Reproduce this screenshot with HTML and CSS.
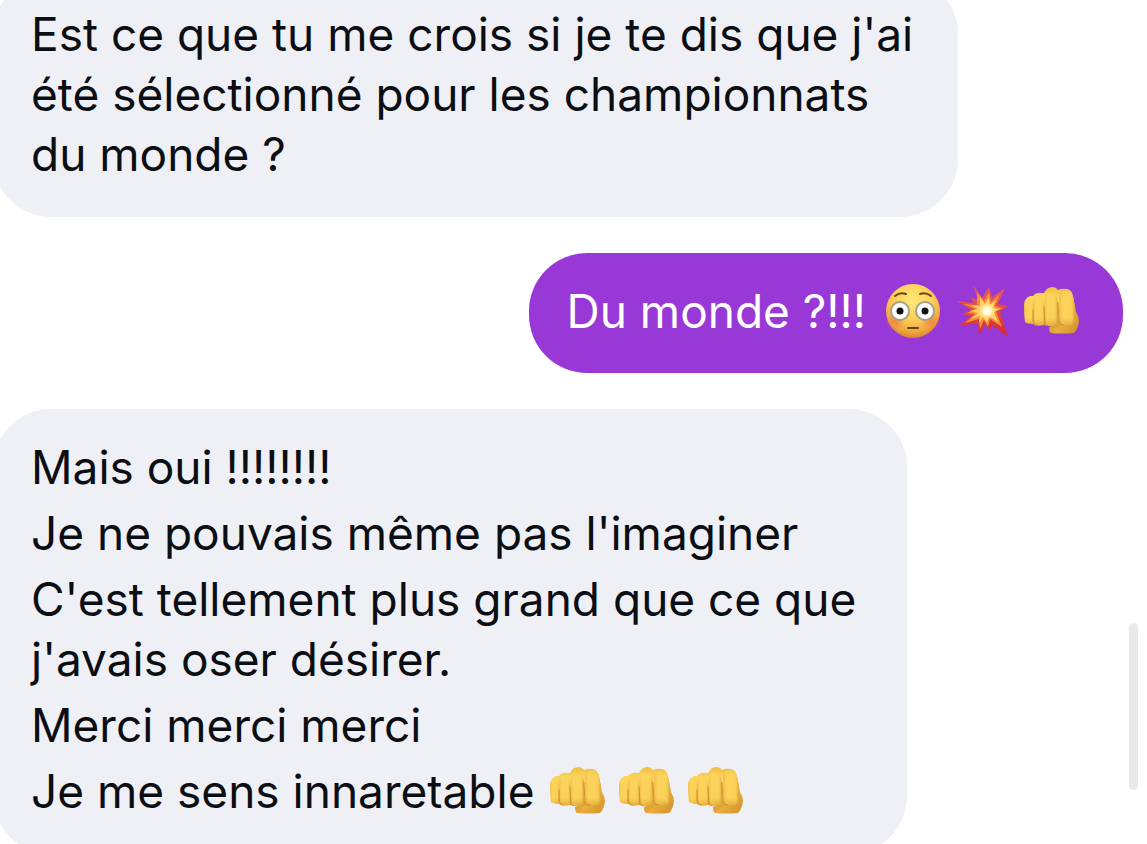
FILE: index.html
```html
<!DOCTYPE html>
<html lang="fr">

<head>
    <meta charset="UTF-8">
    <meta name="viewport" content="width=device-width, initial-scale=1">
    <title>Messages</title>
    <link rel="stylesheet" href="styles.css">
</head>

<body>
    <svg class="sprites" width="0" height="0" aria-hidden="true">
        <defs>
            <linearGradient id="skin" x1="0" y1="0" x2="0" y2="1">
                <stop offset="0" stop-color="#efbd42"/>
                <stop offset="0.25" stop-color="#fbd25a"/>
                <stop offset="0.8" stop-color="#f8cd56"/>
                <stop offset="1" stop-color="#d99a2c"/>
            </linearGradient>
            <linearGradient id="finger" x1="0" y1="0" x2="1" y2="0">
                <stop offset="0" stop-color="#e5ac3a" stop-opacity="0.6"/>
                <stop offset="0.25" stop-color="#ffd760" stop-opacity="0.4"/>
                <stop offset="0.75" stop-color="#ffd760" stop-opacity="0.2"/>
                <stop offset="1" stop-color="#cd8a25" stop-opacity="0.7"/>
            </linearGradient>
            <linearGradient id="thumb" x1="0" y1="0" x2="1" y2="1">
                <stop offset="0" stop-color="#b97820"/>
                <stop offset="0.6" stop-color="#e8ad3b"/>
                <stop offset="1" stop-color="#cf8f2a"/>
            </linearGradient>
            <radialGradient id="face" cx="0.5" cy="0.3" r="0.7">
                <stop offset="0" stop-color="#ffe976"/>
                <stop offset="0.5" stop-color="#fbcf58"/>
                <stop offset="0.85" stop-color="#f0a540"/>
                <stop offset="1" stop-color="#d9822e"/>
            </radialGradient>
            <radialGradient id="cheek">
                <stop offset="0" stop-color="#ee6f3c" stop-opacity="0.6"/>
                <stop offset="1" stop-color="#ee6f3c" stop-opacity="0"/>
            </radialGradient>
            <linearGradient id="flame" x1="0" y1="0" x2="0" y2="1">
                <stop offset="0" stop-color="#d95b70"/>
                <stop offset="0.5" stop-color="#e34a3c"/>
                <stop offset="1" stop-color="#cf2638"/>
            </linearGradient>
            <radialGradient id="glow">
                <stop offset="0" stop-color="#ffffff"/>
                <stop offset="0.4" stop-color="#fffbd0"/>
                <stop offset="1" stop-color="#ffe070" stop-opacity="0"/>
            </radialGradient>
        </defs>
        <symbol id="fist" viewBox="0 0 56 56">
            <path fill="url(#thumb)" d="M49 12Q52 20 53 29Q56 34 56 38Q55 46 51 50Q40 51 28 50Q26 49 26 44L34 41L48 40Z"/>
            <path fill="url(#skin)" d="M1 21Q2 15 7 13Q9 13 10 13Q13 9 19 10Q20 10 21 10Q24 4 29 4Q33 4 35 7Q39 5 44 6Q49 7 50 13Q52 22 52 35Q52 42 47 42Q40 44 36 42Q33 44 29 43Q23 43 21 42Q13 44 10 41Q5 41 2 39Q1 30 1 21Z"/>
            <path fill="url(#finger)" d="M1 21Q2 15 7 14Q10 17 10 23L11 39Q6 42 2 39Q1 30 1 21Z"/>
            <path fill="url(#finger)" d="M10 24Q11 13 15 12Q20 15 21 23L22 41Q17 44 12 42Q10 41 10 24Z"/>
            <path fill="url(#finger)" d="M21 23Q22 10 27 9Q34 11 35 20L35 39Q34 43 29 43Q23 43 22 41Z"/>
            <path fill="url(#finger)" d="M36 20Q35 9 41 8Q49 6 50 13Q52 22 52 35Q52 42 47 42Q38 44 36 40Z"/>
            <path fill="none" stroke="#bd7b23" stroke-width="1" stroke-linecap="round" opacity="0.7" d="M10 27V38Q11 41 14 42M21 24L22 40Q23 42 25 43M35 20L36 40Q38 42 41 42"/>
        </symbol>
        <symbol id="flushed" viewBox="0 0 56 56">
            <circle cx="28" cy="28" r="27" fill="url(#face)"/>
            <circle cx="10" cy="38" r="10" fill="url(#cheek)"/>
            <circle cx="46" cy="38" r="10" fill="url(#cheek)"/>
            <g fill="#ffffff" stroke="#a3a08c" stroke-width="2">
                <circle cx="15" cy="28" r="9"/>
                <circle cx="40" cy="28" r="9"/>
            </g>
            <circle cx="15" cy="28" r="3.5" fill="#111111"/>
            <circle cx="40" cy="28" r="3.5" fill="#111111"/>
            <g fill="none" stroke="#6d4217" stroke-width="2" stroke-linecap="round">
                <path d="M10 13Q15 9 21 11M35 11Q41 9 46 13"/>
                <path d="M23 45H33"/>
            </g>
        </symbol>
        <symbol id="boom" viewBox="0 0 56 56">
            <path fill="url(#flame)" d="M19 2L28 15L35 4L38 14L51 5L44 21L54 23L46 28L54 54L38 42L36 48L31 41L25 53L24 40L5 43L17 33L8 31L17 27L3 18L20 20L16 14L24 17Z"/>
            <path fill="#f58b3c" d="M23 9L30 18L35 9L37 19L46 11L41 23L49 25L42 28L48 44L36 36L34 44L30 37L26 46L25 36L11 40L21 31L13 30L21 26L9 21L23 22Z"/>
            <path fill="#ffcf68" d="M26 14L31 21L35 14L36 22L42 17L39 25L46 26L40 29L44 39L35 33L33 40L29 34L25 40L26 33L17 36L24 30L16 28L24 26L17 22L26 23Z"/>
            <circle cx="33" cy="28" r="9" fill="url(#glow)"/>
        </symbol>
    </svg>

    <main class="thread">
        <div class="bubble received">
            <p>Est ce que tu me crois si je te dis que j'ai<br>été sélectionné pour les championnats<br>du monde ?</p>
        </div>
        <div class="bubble sent">
            <p>Du monde ?!!! <span class="emojis"><svg class="emoji" role="img" aria-label="😳"><use href="#flushed"/></svg><svg class="emoji" role="img" aria-label="💥"><use href="#boom"/></svg><svg class="emoji" role="img" aria-label="👊"><use href="#fist"/></svg></span></p>
        </div>
        <div class="bubble received">
            <p>Mais oui !!!!!!!!</p>
            <p>Je ne pouvais même pas l'imaginer</p>
            <p>C'est tellement plus grand que ce que<br>j'avais oser désirer.</p>
            <p>Merci merci merci</p>
            <p>Je me sens innaretable <span class="emojis"><svg class="emoji" role="img" aria-label="👊"><use href="#fist"/></svg><svg class="emoji" role="img" aria-label="👊"><use href="#fist"/></svg><svg class="emoji" role="img" aria-label="👊"><use href="#fist"/></svg></span></p>
        </div>
    </main>
    <div class="scrollbar"></div>
</body>

</html>
```
FILE: styles.css
```css
body {
    margin: 0;
    height: 100vh;
    overflow: hidden;
    background-color: #ffffff;
    font-family: Inter, "Liberation Sans", sans-serif;
    font-size: 46px;
    line-height: 60px;
    color: #0b0e13;
}

.sprites {
    position: absolute;
}

/* the thread is scrolled: the first bubble runs past the top edge */
.thread {
    display: flex;
    flex-direction: column;
    gap: 36px;
    margin: -24px 24px 0 -7px;
}

.bubble {
    display: flex;
    flex-direction: column;
    gap: 6px;
    box-sizing: border-box;
    max-width: 85.4%;
    padding: 28px 51px 33px 38px;
    border-radius: 58px;
}

.bubble p {
    margin: 0;
    white-space: nowrap;
}

.received {
    align-self: flex-start;
    background-color: #eff0f5;
}

.sent {
    align-self: flex-end;
    padding: 28px 44px 32px 38px;
    background-color: #9839d7;
    color: #ffffff;
}

.emojis {
    display: inline-flex;
    box-sizing: border-box;
    gap: 13px;
    height: 60px;
    padding-top: 2px;
    margin-left: 2px;
    vertical-align: top;
}

.sent .emojis {
    margin-left: 6px;
}

.emoji {
    width: 56px;
    height: 56px;
}

.scrollbar {
    position: absolute;
    top: 623px;
    right: 9px;
    width: 9px;
    height: 167px;
    border-radius: 5px;
    background-color: #e9e9e9;
}
```
